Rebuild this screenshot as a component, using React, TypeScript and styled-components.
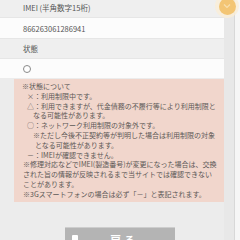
import React from 'react';
import styled, { createGlobalStyle } from 'styled-components';

const GlobalStyle = createGlobalStyle`
	*, *::before, *::after {
		box-sizing: border-box;
	}
	html, body {
		margin: 0;
		padding: 0;
		background: #ececec;
		overflow: hidden;
	}
	body {
		font-family: "Noto Sans CJK JP", "Noto Sans", sans-serif;
		color: #555;
	}
`;

const Page = styled.div`
	position: relative;
	display: flex;
	height: 240px;
	overflow: hidden;
`;

const Main = styled.main`
	width: 224px;
	display: flex;
	flex-direction: column;
	margin-top: -4px;
	& > * {
		flex-shrink: 0;
	}
`;

const LabelRow = styled.div<{ $h: number }>`
	height: ${p => p.$h}px;
	display: flex;
	align-items: center;
	padding-left: 23px;
	background: #efefef;
	border-top: 1px solid #e6e6e6;
	font-size: 7.5px;
	color: #555;
`;

const ValueRow = styled.div<{ $h: number }>`
	height: ${p => p.$h}px;
	display: flex;
	align-items: center;
	padding-left: 23px;
	background: #fcfcfc;
	border-top: 1px solid #e6e6e6;
	font-size: 7.5px;
	color: #555;
`;

const Radio = styled.span`
	width: 8px;
	height: 8px;
	border: 1px solid #8a8a8a;
	border-radius: 50%;
	background: #fff;
`;

const Notice = styled.div`
	margin: 1px 0 0 14px;
	padding: 3px 0 2px 8px;
	background: #f1d6cc;
	font-size: 7px;
	line-height: 9.8px;
	color: #5c5856;
	white-space: nowrap;
`;

const NoteLine = styled.div<{ $indent?: number }>`
	padding-left: ${p => p.$indent || 0}px;
`;

const Footer = styled.div`
	padding: 25px 0 0 65px;
`;

const BackButton = styled.button`
	width: 110px;
	height: 30px;
	display: flex;
	align-items: flex-start;
	padding: 4px 0 0 7px;
	border: none;
	border-top: 1px solid #cdcdcd;
	background: #b4b4b4;
	color: #fff;
	font-family: inherit;
	font-size: 11px;
	font-weight: bold;
`;

const BackIcon = styled.span`
	width: 6px;
	height: 8px;
	background: #fff;
	border-radius: 1px;
	margin-top: 3px;
`;

const BackText = styled.span`
	margin-left: 32px;
	letter-spacing: 3px;
`;

const Gutter = styled.div`
	flex: 1;
	display: flex;
`;

const Track = styled.div`
	width: 10px;
	background: #e8e8e8;
`;

const TrackEdge = styled.div`
	width: 1px;
	background: #d8d8d8;
`;

const TrackRest = styled.div`
	flex: 1;
	background: #f6f6f6;
`;

const PageTop = styled.div`
	position: absolute;
	left: 215px;
	top: -6px;
	width: 24px;
	height: 24px;
	border-radius: 50%;
	background: rgba(250, 238, 215, 0.8);
	display: flex;
	align-items: center;
	justify-content: center;
`;

const PageTopDot = styled.div`
	width: 17px;
	height: 17px;
	border-radius: 50%;
	background: #f3c574;
	display: flex;
	align-items: center;
	justify-content: center;
`;

const NOTES: { text: string; indent?: number }[] = [
	{ text: '※状態について' },
	{ text: '×：利用制限中です。', indent: 5 },
	{ text: '△：利用できますが、代金債務の不履行等により利用制限と', indent: 5 },
	{ text: 'なる可能性があります。', indent: 11 },
	{ text: '○：ネットワーク利用制限の対象外です。', indent: 5 },
	{ text: '※ただし今後不正契約等が判明した場合は利用制限の対象', indent: 11 },
	{ text: 'となる可能性があります。', indent: 13 },
	{ text: '－：IMEIが確認できません。', indent: 5 },
	{ text: '※修理対応などでIMEI(製造番号)が変更になった場合は、交換', indent: 1 },
	{ text: 'された旨の情報が反映されるまで当サイトでは確認できない', indent: 1 },
	{ text: 'ことがあります。', indent: 1 },
	{ text: '※3Gスマートフォンの場合は必ず「－」と表記されます。', indent: 1 },
];

function App() {
	return (
		<>
			<GlobalStyle />
			<Page>
				<Main>
					<LabelRow $h={21}>IMEI (半角数字15桁)</LabelRow>
					<ValueRow $h={21}>866263061286941</ValueRow>
					<LabelRow $h={20}>状態</LabelRow>
					<ValueRow $h={20}>
						<Radio />
					</ValueRow>
					<Notice>
						{NOTES.map((n, i) => (
							<NoteLine key={i} $indent={n.indent}>
								{n.text}
							</NoteLine>
						))}
					</Notice>
					<Footer>
						<BackButton>
							<BackIcon />
							<BackText>戻る</BackText>
						</BackButton>
					</Footer>
				</Main>
				<Gutter>
					<Track />
					<TrackEdge />
					<TrackRest />
				</Gutter>
				<PageTop>
					<PageTopDot>
						<svg width="8" height="6" viewBox="0 0 8 6">
							<path d="M1 1.5 L4 4.5 L7 1.5" fill="none" stroke="#f8dfae" strokeWidth="1.2" />
						</svg>
					</PageTopDot>
				</PageTop>
			</Page>
		</>
	);
}

export default App;
